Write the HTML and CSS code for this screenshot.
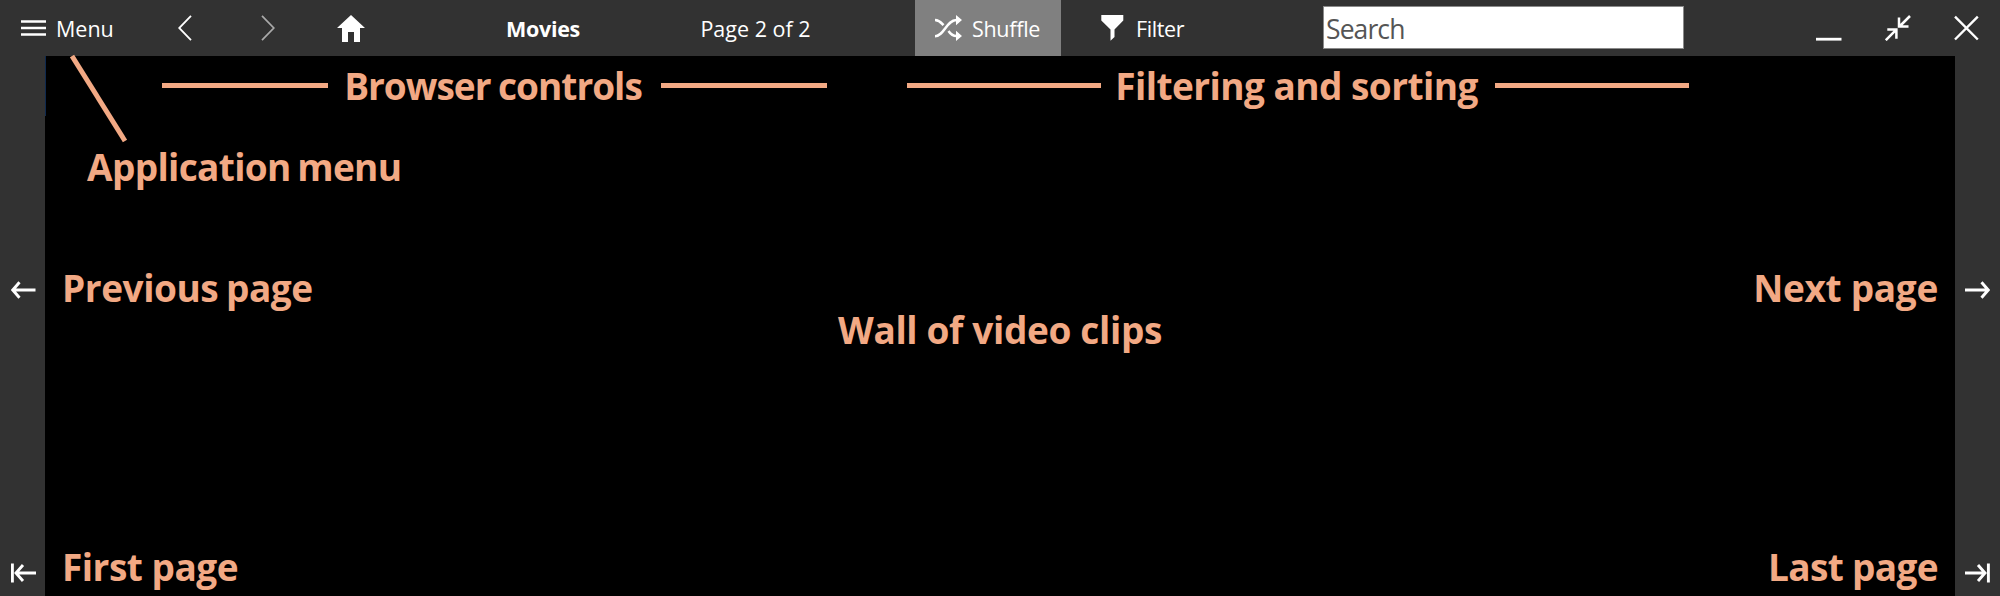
FILE: index.html
```html
<!DOCTYPE html>
<html lang="en">
<head>
<meta charset="utf-8">
<title>Movies</title>
<link rel="stylesheet" href="styles.css">
</head>
<body>
<div class="app">
  <header class="toolbar">
    <div class="menu">
      <svg width="25" height="16" viewBox="0 0 25 16"><path d="M0 1.400h25M0 8h25M0 14.500h25" stroke="#fff" stroke-width="2.500"/></svg>
      <span class="t-menu">Menu</span>
    </div>
    <div class="nav"><svg width="14" height="26" viewBox="0 0 14 26" fill="none"><path d="M13 .8L1.200 13 13 25.200" stroke="#fff" stroke-width="1.800"/></svg></div>
    <div class="nav"><svg width="14" height="26" viewBox="0 0 14 26" fill="none"><path d="M1 .8L12.800 13 1 25.200" stroke="#aaa" stroke-width="1.700"/></svg></div>
    <div class="nav"><svg width="28" height="27" viewBox="0 0 28 27"><path d="M14 0L28 13H23V27H17V17H11V27H5V13H0Z" fill="#fff"/></svg></div>
    <div class="title"><b class="t-movies">Movies</b></div>
    <div class="pages"><span class="t-page">Page 2 of 2</span></div>
    <div class="shuffle">
      <svg width="27" height="26" viewBox="0 0 27 26" fill="none"><path d="M0 5C4.500 5 6 7.500 8.500 10.200M0 21.300C9 21.300 11.500 5 21.500 5M13.500 16C15.500 19 17.500 21 21.500 21" stroke="#fff" stroke-width="2.500"/><path d="M21 0L27 5 21 10.200ZM21 15.800L27 21 21 26Z" fill="#fff"/></svg>
      <span class="t-shuffle">Shuffle</span>
    </div>
    <div class="filter">
      <svg width="23" height="26" viewBox="0 0 23 26"><path d="M.3 0H22.300V5.500L13.500 14.500V22L9.500 25.700V14.500L.3 5.500Z" fill="#fff"/></svg>
      <span class="t-filter">Filter</span>
    </div>
    <div class="search"><span class="t-search">Search</span></div>
    <div class="window">
      <svg width="26" height="26" viewBox="0 0 26 26"><path d="M0 24.200h25.500" stroke="#fff" stroke-width="2.800"/></svg>
      <svg width="26" height="26" viewBox="0 0 26 26" fill="none" stroke="#fff" stroke-width="2.500"><path d="M25 1L14.500 11.500M14 2.500V11.600H23.500M.8 25.200L11.300 14.700M2.300 14.600H11.400V23.700"/></svg>
      <svg width="26" height="26" viewBox="0 0 26 26"><path d="M1 1.700L23.800 24.500M23.800 1.700L1 24.500" stroke="#fff" stroke-width="2.400"/></svg>
    </div>
  </header>
  <div class="body">
    <nav class="side left">
      <svg class="page-arrow" width="25" height="18" viewBox="0 0 25 18" fill="none"><path d="M24.500 9H2M8.500 1.200L1.800 9 8.500 16.800" stroke="#fff" stroke-width="2.900"/></svg>
      <svg class="end-arrow" width="25" height="20" viewBox="0 0 25 20" fill="none"><path d="M1.400 .5V19.500M25 10H4.500M12 2L5 10 12 18" stroke="#fff" stroke-width="2.900"/></svg>
    </nav>
    <main class="wall">
      <div class="groups">
        <div class="group browser"><i></i><span class="t-browser">Browser controls</span><i></i></div>
        <div class="group sorting"><i></i><span class="t-sorting">Filtering and sorting</span><i></i></div>
      </div>
      <div class="row appmenu"><span class="t-appmenu">Application menu</span></div>
      <div class="row paging"><span class="t-prev">Previous page</span><span class="t-next">Next page</span></div>
      <div class="row clips"><span class="t-wall">Wall of video clips</span></div>
      <div class="row ends"><span class="t-first">First page</span><span class="t-last">Last page</span></div>
    </main>
    <nav class="side">
      <svg class="page-arrow" width="25" height="18" viewBox="0 0 25 18" fill="none"><path d="M0 9H23M16.500 1.200L23.200 9 16.500 16.800" stroke="#fff" stroke-width="2.900"/></svg>
      <svg class="end-arrow" width="25" height="20" viewBox="0 0 25 20" fill="none"><path d="M23.400 .5V19.500M0 10H20M13 2L20 10 13 18" stroke="#fff" stroke-width="2.900"/></svg>
    </nav>
  </div>
  <svg class="pointer" width="62" height="92" viewBox="0 0 62 92"><path d="M4 5L57 90" stroke="#f2a984" stroke-width="5"/></svg>
</div>
</body>
</html>
```
FILE: styles.css
```css
* { box-sizing: border-box; }
body {
  margin: 0;
  background: #000;
  color: #fff;
  font-family: "Open Sans", "Noto Sans", sans-serif;
}
svg { display: block; flex: none; }
span, b { white-space: nowrap; }
.app { position: relative; width: 2000px; height: 596px; overflow: hidden; }
.toolbar {
  display: flex;
  height: 56px;
  background: #323232;
  font-size: 21.5px;
  line-height: 30px;
}
.toolbar > div { display: flex; align-items: center; height: 56px; flex: none; }
.toolbar span, .toolbar b { padding-top: 2px; }
.menu { width: 143px; padding-left: 21px; gap: 10px; }
.nav { width: 83px; justify-content: center; }
.title { width: 302px; justify-content: center; }
.pages { width: 123px; justify-content: center; }
.t-movies { letter-spacing: -0.3px; }
.toolbar .t-page, .toolbar .t-movies { padding-top: 1px; }
.shuffle { width: 146px; margin-left: 98px; padding-left: 20px; gap: 10px; background: #808080; }
.t-shuffle { letter-spacing: -0.3px; }
.filter { width: 262px; padding-left: 40px; gap: 12px; }
.t-filter { letter-spacing: -0.4px; }
.toolbar > .search {
  width: 361px;
  height: 43px;
  margin-top: 6px;
  padding-left: 2px;
  border: 1px solid #8a8a8a;
  background: #fff;
  color: #555;
  font-size: 26.5px;
  line-height: 36px;
}
.t-search { letter-spacing: -0.9px; }
.window { margin-left: 132px; gap: 43px; }
.body { display: flex; height: 540px; }
.side {
  display: flex;
  flex-direction: column;
  width: 45px;
  background: #323232;
  align-items: center;
}
.left { padding-left: 2px; }
.page-arrow { margin-top: 225px; }
.end-arrow { margin-top: 264px; }
.wall {
  flex: 1;
  padding: 5px 17px 0 17px;
  background: linear-gradient(#0f2a50, #0f2a50) 0 0 / 1px 60px no-repeat #000;
  color: #f2a984;
  font-size: 37px;
  font-weight: 700;
  line-height: 50px;
}
.groups { display: flex; gap: 80px; padding-left: 100px; height: 50px; }
.group { display: flex; align-items: center; justify-content: space-between; height: 50px; }
.group i { height: 5px; background: #f2a984; margin-bottom: 1px; }
.browser { width: 665px; }
.browser i { width: 166px; }
.t-browser { margin-right: 3px; letter-spacing: -1px; word-spacing: -1px; }
.sorting { width: 782px; }
.sorting i { width: 194px; }
.t-sorting { margin-right: 3px; letter-spacing: -0.55px; }
.row { display: flex; justify-content: space-between; height: 50px; }
.appmenu { margin-top: 31px; padding-left: 25px; }
.t-appmenu { letter-spacing: -0.65px; word-spacing: -2.5px; }
.paging { margin-top: 71px; }
.t-prev { letter-spacing: -0.45px; word-spacing: -1.5px; }
.t-next { letter-spacing: -0.3px; }
.clips { margin-top: -8px; justify-content: center; }
.t-wall { letter-spacing: -0.35px; }
.ends { margin-top: 187px; }
.t-first { letter-spacing: -0.5px; }
.t-last { letter-spacing: -0.65px; }
.pointer { position: absolute; left: 68px; top: 51px; }
```
